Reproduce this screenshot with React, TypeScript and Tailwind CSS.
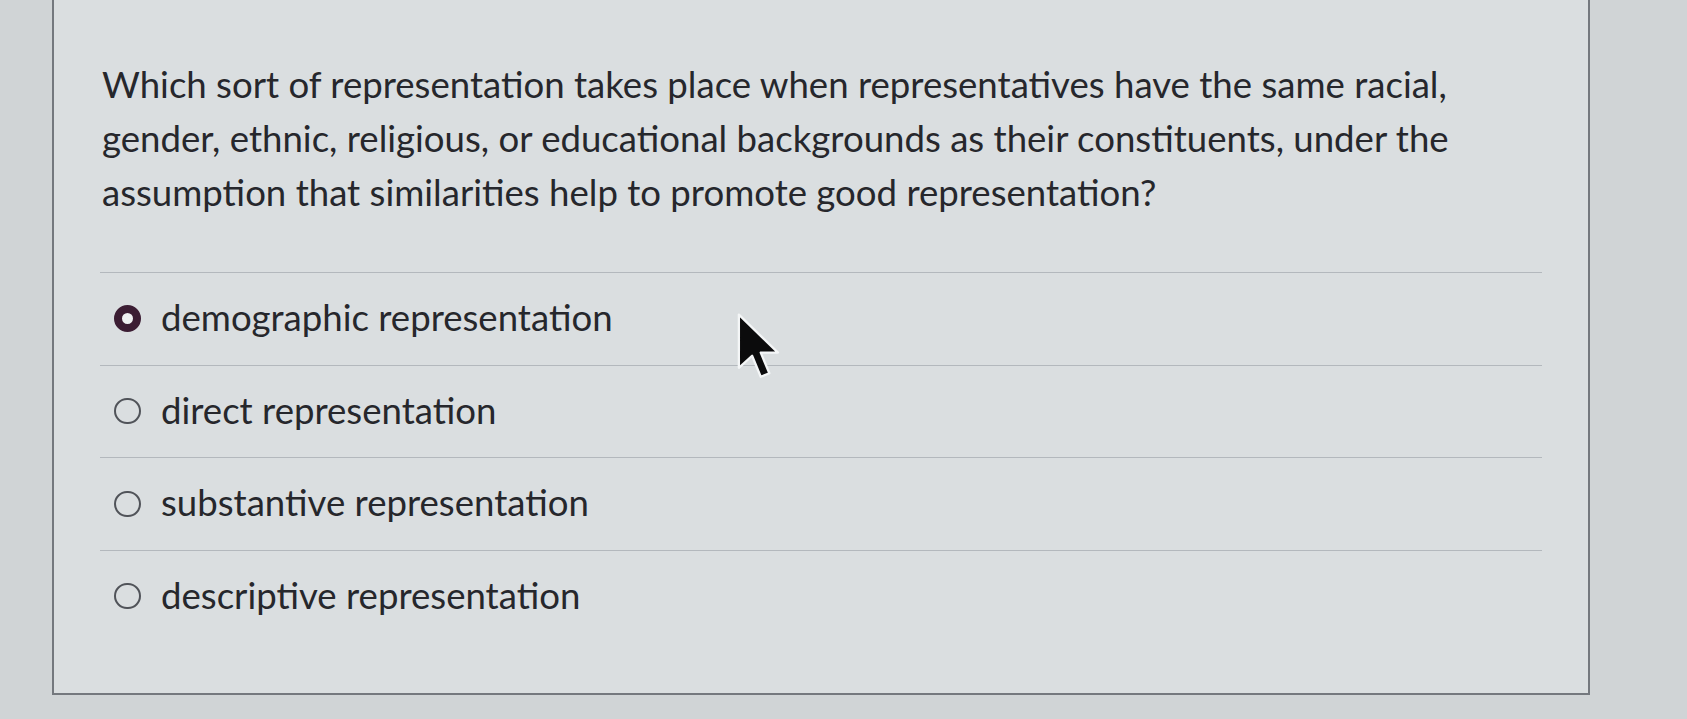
import React from 'react';

const options = [
  { label: 'demographic representation', selected: true },
  { label: 'direct representation', selected: false },
  { label: 'substantive representation', selected: false },
  { label: 'descriptive representation', selected: false },
];

const Radio = ({ selected }: { selected: boolean }) =>
  selected ? (
    <span className="block w-[27px] h-[27px] rounded-full border-[8px] border-[#3b1d33] bg-[#eef0f1] shrink-0" />
  ) : (
    <span className="block w-[27px] h-[26px] rounded-full border-[2.5px] border-[#505359] shrink-0" />
  );

// mouse pointer that sits over the card in the photo
const Pointer = () => (
  <svg
    className="absolute left-[736px] top-[311px]"
    width="46"
    height="72"
    viewBox="0 0 16 24.5"
  >
    <path
      d="M1 1 L1 19.5 L5.6 15.3 L8.6 22.6 L11.6 21.4 L8.6 14.2 L14.6 14.2 Z"
      fill="#0b0b0c"
      stroke="#f4f6f7"
      strokeWidth="0.8"
      strokeLinejoin="round"
    />
  </svg>
);

export default function App() {
  return (
    <div
      className="relative w-[1687px] h-[719px] overflow-hidden bg-[#d0d4d6] text-[#26272c]"
      style={{ fontFamily: 'Lato, "Open Sans", sans-serif' }}
    >
      <div className="ml-[52px] w-[1538px] h-[695px] bg-[#dadee0] border-x-2 border-b-2 border-[#74787e]">
        <div className="pt-[57px] pl-[48px] pr-[40px]">
          <p className="text-[36.6px] leading-[54px] whitespace-nowrap">
            Which sort of representation takes place when representatives have the same racial,
            <br />
            gender, ethnic, religious, or educational backgrounds as their constituents, under the
            <br />
            assumption that similarities help to promote good representation?
          </p>
        </div>

        <ul className="mt-[53px] ml-[46px] w-[1442px]">
          {options.map((o) => (
            <li
              key={o.label}
              className="flex items-center h-[92.5px] border-t border-[#b3b8bd]"
            >
              <span className="ml-[14px]">
                <Radio selected={o.selected} />
              </span>
              <span className="ml-[20px] text-[36.6px] leading-none pb-[2px]">{o.label}</span>
            </li>
          ))}
        </ul>
      </div>
      <Pointer />
    </div>
  );
}
